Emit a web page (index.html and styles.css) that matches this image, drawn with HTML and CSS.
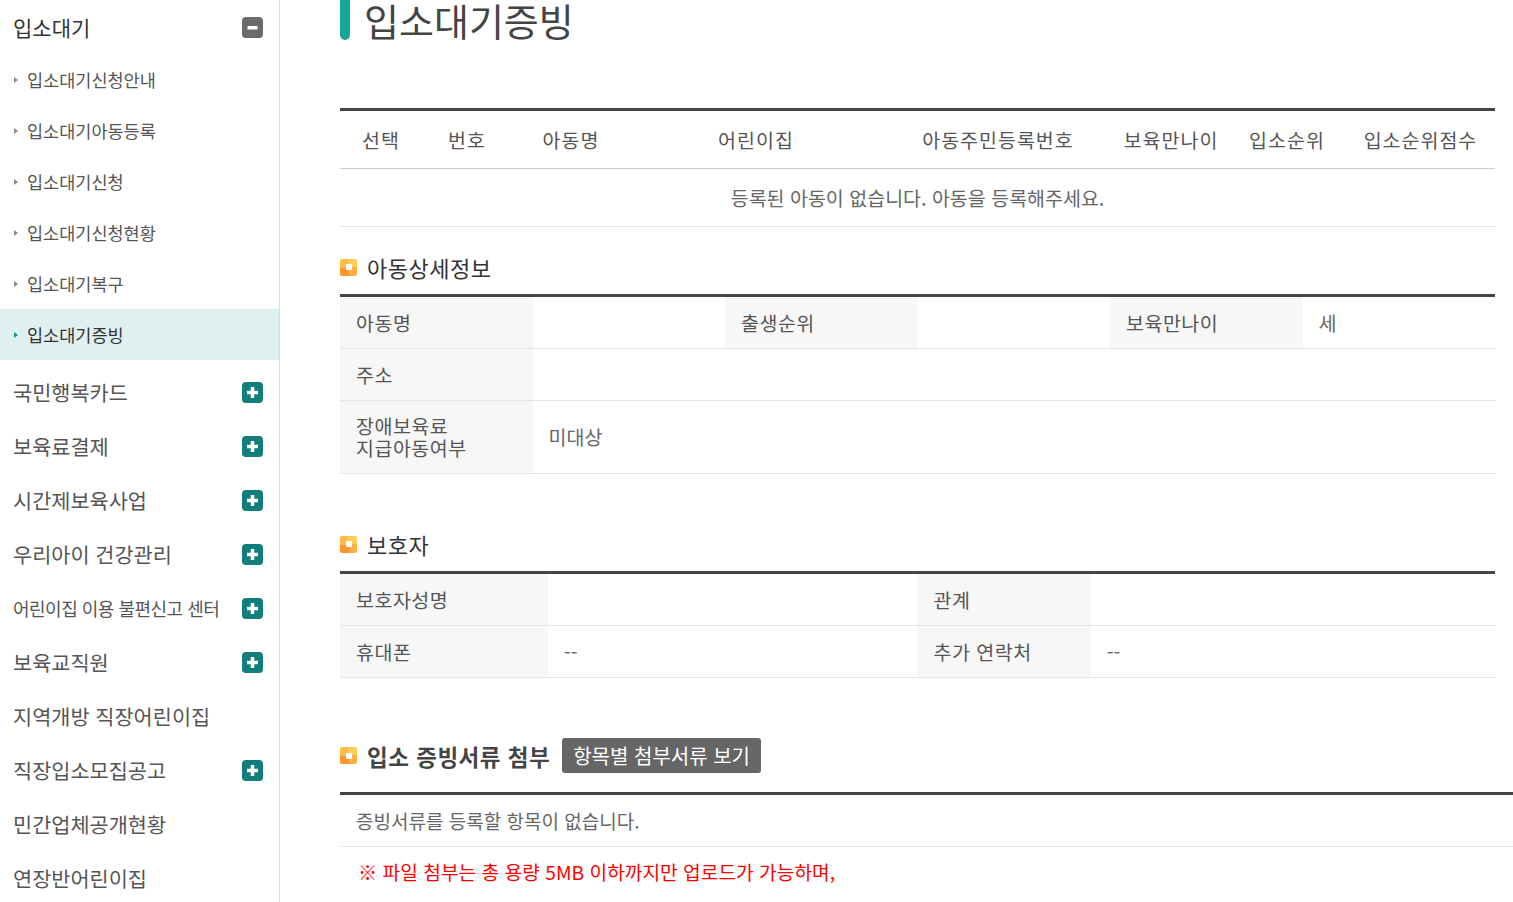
FILE: index.html
```html
<!DOCTYPE html>
<html lang="ko">
<head>
    <meta charset="UTF-8">
    <meta name="viewport" content="width=device-width, initial-scale=1.0">
    <title>입소대기증빙</title>
    <link rel="stylesheet" href="styles.css">
</head>
<body>
    <!-- Left menu -->
    <nav class="lnb">
        <div class="lnb-head">
            <span>입소대기</span>
            <svg class="toggle" width="21" height="21" viewBox="0 0 21 21"><rect width="21" height="21" rx="4" fill="#6b6b6b"/><rect x="5.5" y="9" width="10" height="3.5" fill="#fff"/></svg>
        </div>
        <ul class="sub-menu">
            <li><span class="bullet"></span>입소대기신청안내</li>
            <li><span class="bullet"></span>입소대기아동등록</li>
            <li><span class="bullet"></span>입소대기신청</li>
            <li><span class="bullet"></span>입소대기신청현황</li>
            <li><span class="bullet"></span>입소대기복구</li>
            <li class="active"><span class="bullet"></span>입소대기증빙</li>
        </ul>
        <ul class="main-menu">
            <li><span>국민행복카드</span><svg class="toggle" width="21" height="21" viewBox="0 0 21 21"><rect width="21" height="21" rx="4" fill="#117e7b"/><path d="M10.5 5v11M5 10.5h11" stroke="#fff" stroke-width="3.5"/></svg></li>
            <li><span>보육료결제</span><svg class="toggle" width="21" height="21" viewBox="0 0 21 21"><rect width="21" height="21" rx="4" fill="#117e7b"/><path d="M10.5 5v11M5 10.5h11" stroke="#fff" stroke-width="3.5"/></svg></li>
            <li><span>시간제보육사업</span><svg class="toggle" width="21" height="21" viewBox="0 0 21 21"><rect width="21" height="21" rx="4" fill="#117e7b"/><path d="M10.5 5v11M5 10.5h11" stroke="#fff" stroke-width="3.5"/></svg></li>
            <li><span>우리아이 건강관리</span><svg class="toggle" width="21" height="21" viewBox="0 0 21 21"><rect width="21" height="21" rx="4" fill="#117e7b"/><path d="M10.5 5v11M5 10.5h11" stroke="#fff" stroke-width="3.5"/></svg></li>
            <li><span class="narrow">어린이집 이용 불편신고 센터</span><svg class="toggle" width="21" height="21" viewBox="0 0 21 21"><rect width="21" height="21" rx="4" fill="#117e7b"/><path d="M10.5 5v11M5 10.5h11" stroke="#fff" stroke-width="3.5"/></svg></li>
            <li><span>보육교직원</span><svg class="toggle" width="21" height="21" viewBox="0 0 21 21"><rect width="21" height="21" rx="4" fill="#117e7b"/><path d="M10.5 5v11M5 10.5h11" stroke="#fff" stroke-width="3.5"/></svg></li>
            <li><span>지역개방 직장어린이집</span></li>
            <li><span>직장입소모집공고</span><svg class="toggle" width="21" height="21" viewBox="0 0 21 21"><rect width="21" height="21" rx="4" fill="#117e7b"/><path d="M10.5 5v11M5 10.5h11" stroke="#fff" stroke-width="3.5"/></svg></li>
            <li><span>민간업체공개현황</span></li>
            <li><span>연장반어린이집</span></li>
        </ul>
    </nav>

    <!-- Content -->
    <main class="content">
        <h1 class="page-title"><span class="bar"></span>입소대기증빙</h1>

        <table class="list-table">
            <colgroup>
                <col class="c-select"><col class="c-no"><col class="c-name"><col class="c-center">
                <col class="c-rrn"><col class="c-age"><col class="c-rank"><col class="c-score">
            </colgroup>
            <thead>
                <tr>
                    <th>선택</th><th>번호</th><th>아동명</th><th>어린이집</th>
                    <th>아동주민등록번호</th><th>보육만나이</th><th>입소순위</th><th>입소순위점수</th>
                </tr>
            </thead>
            <tbody>
                <tr><td colspan="8">등록된 아동이 없습니다. 아동을 등록해주세요.</td></tr>
            </tbody>
        </table>

        <h2 class="section-title first"><span class="sq-icon"></span>아동상세정보</h2>
        <table class="info-table">
            <tr>
                <th>아동명</th><td></td>
                <th>출생순위</th><td></td>
                <th>보육만나이</th><td>세</td>
            </tr>
            <tr>
                <th>주소</th><td colspan="5"></td>
            </tr>
            <tr>
                <th class="two-line">장애보육료<br>지급아동여부</th><td colspan="5">미대상</td>
            </tr>
        </table>

        <h2 class="section-title"><span class="sq-icon"></span>보호자</h2>
        <table class="info-table">
            <colgroup><col class="g1"><col class="g2"><col class="g3"><col class="g4"></colgroup>
            <tr>
                <th>보호자성명</th><td></td>
                <th>관계</th><td></td>
            </tr>
            <tr>
                <th>휴대폰</th><td>--</td>
                <th>추가 연락처</th><td>--</td>
            </tr>
        </table>

        <h2 class="section-title attach"><span class="sq-icon"></span><b>입소 증빙서류 첨부</b><button class="btn-gray">항목별 첨부서류 보기</button></h2>
        <div class="doc-box">
            <p class="doc-empty">증빙서류를 등록할 항목이 없습니다.</p>
            <p class="doc-note">※ 파일 첨부는 총 용량 5MB 이하까지만 업로드가 가능하며,</p>
        </div>
    </main>
</body>
</html>
```

FILE: styles.css
```css
body {
    margin: 0;
    display: flex;
    font-family: "Noto Sans CJK KR", "Noto Sans", sans-serif;
    color: #555;
    background: #fff;
    overflow: hidden;
}

ul {
    list-style: none;
    margin: 0;
    padding: 0;
}

/* Left menu */
.lnb {
    width: 279px;
    flex-shrink: 0;
    border-right: 1px solid #ddd;
    min-height: 100vh;
}

.lnb-head {
    height: 54px;
    display: flex;
    align-items: center;
    justify-content: space-between;
    padding: 0 16px 0 13px;
    font-size: 21px;
    color: #333;
}

.toggle {
    display: block;
    flex-shrink: 0;
}

.sub-menu {
    padding-bottom: 5px;
}

.sub-menu li {
    height: 51px;
    display: flex;
    align-items: center;
    padding-left: 14px;
    font-size: 17.5px;
    color: #555;
}

.sub-menu li.active {
    background-color: #def0ef;
    color: #333;
}

.bullet {
    width: 0;
    height: 0;
    border-left: 4px solid #8a8a8a;
    border-top: 3.5px solid transparent;
    border-bottom: 3.5px solid transparent;
    margin-right: 9px;
}

.active .bullet {
    border-left-color: #159a94;
}

.main-menu li {
    height: 54px;
    display: flex;
    align-items: center;
    justify-content: space-between;
    padding: 0 16px 0 13px;
    font-size: 20.8px;
    color: #555;
}

.main-menu .narrow {
    font-size: 18px;
    letter-spacing: -0.5px;
}

/* Content */
.content {
    flex: 1;
    padding: 0 18px 0 60px;
}

.page-title {
    display: flex;
    align-items: center;
    height: 40px;
    margin: 0 0 68px;
    font-size: 38px;
    font-weight: 400;
    color: #444;
    line-height: 40px;
}

.page-title .bar {
    width: 10px;
    height: 40px;
    background-color: #17a698;
    border-radius: 0 0 5px 5px;
    margin-right: 14px;
}

table {
    width: 100%;
    border-collapse: collapse;
    table-layout: fixed;
    border-top: 3px solid #444;
}

.list-table th {
    height: 57px;
    padding: 0;
    font-size: 19.5px;
    font-weight: 400;
    letter-spacing: 1px;
    color: #555;
    border-bottom: 1px solid #ccc;
}

.list-table td {
    height: 57px;
    padding: 0;
    text-align: center;
    font-size: 19.5px;
    color: #666;
    border-bottom: 1px solid #e5e5e5;
}

.c-select { width: 82px; }
.c-no { width: 90px; }
.c-name { width: 118px; }
.c-center { width: 252px; }
.c-rrn { width: 232px; }
.c-age { width: 114px; }
.c-rank { width: 118px; }
.c-score { width: 149px; }

.section-title {
    display: flex;
    align-items: center;
    height: 30px;
    margin: 55px 0 12px;
    font-size: 22px;
    font-weight: 400;
    color: #333;
    letter-spacing: 0.5px;
}

.section-title.first {
    margin-top: 25px;
}

.section-title.attach {
    height: 35px;
    margin: 60px 0 19px;
}

.section-title b {
    font-size: 22.5px;
    font-weight: 700;
    color: #444;
    letter-spacing: 0.5px;
}

.sq-icon {
    width: 17px;
    height: 17px;
    margin-right: 10px;
    border-radius: 2px;
    background:
        linear-gradient(#fff, #fff) center / 6px 6px no-repeat,
        conic-gradient(#ffcc55 0 25%, #ffb040 25% 50%, #ff952a 50% 75%, #ffbb48 75% 100%);
}

.btn-gray {
    margin-left: 12px;
    height: 35px;
    padding: 0 11px;
    border: none;
    border-radius: 3px;
    background-color: #666;
    color: #fff;
    font-family: inherit;
    font-size: 20px;
}

.info-table {
    margin-bottom: 30px;
}

.info-table th,
.info-table td {
    height: 51px;
    padding: 0 16px;
    font-size: 19.5px;
    font-weight: 400;
    line-height: 22px;
    text-align: left;
    border-bottom: 1px solid #e5e5e5;
}

.info-table th {
    background-color: #f7f7f7;
    color: #555;
    letter-spacing: 0.5px;
}

.info-table td {
    color: #666;
}

.info-table th.two-line {
    height: 72px;
}

.g1 { width: 18%; }
.g2 { width: 32%; }
.g3 { width: 15%; }
.g4 { width: 35%; }

.doc-box {
    border-top: 3px solid #444;
    margin-right: -18px;
}

.doc-empty {
    margin: 0;
    height: 51px;
    line-height: 51px;
    padding-left: 16px;
    font-size: 19px;
    color: #666;
    border-bottom: 1px solid #e5e5e5;
}

.doc-note {
    margin: 0;
    padding: 11px 0 0 18px;
    font-size: 19.2px;
    color: #f00;
}
```
